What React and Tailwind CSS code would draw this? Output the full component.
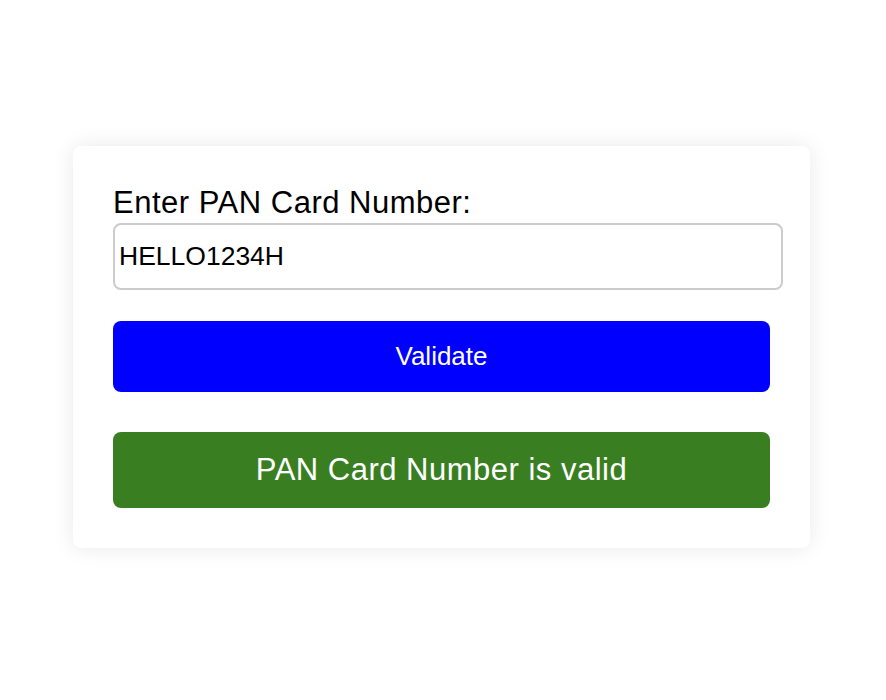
export default function App() {
  return (
    <div className="min-h-screen w-full bg-white flex items-center justify-center pb-[6px] pr-[3px]" style={{ fontFamily: '"Liberation Sans", Arial, sans-serif' }}>
      <div className="w-[737px] rounded-lg bg-white p-10 shadow-[0_0_22px_rgba(0,0,0,0.09)]">
        <label className="block text-[31px] leading-[34px] tracking-[0.5px] text-black mb-[3px]">Enter PAN Card Number:</label>
        <input
          type="text"
          defaultValue="HELLO1234H"
          className="block w-[670px] h-[67px] rounded-lg border-2 border-[#cccccc] px-1 text-[26.5px] text-black outline-none"
          style={{ fontFamily: '"Liberation Sans", Arial, sans-serif' }}
        />
        <button
          className="mt-[31px] flex h-[71px] w-full items-center justify-center rounded-lg bg-[#0000ff] text-[26px] text-white"
          style={{ fontFamily: '"Liberation Sans", Arial, sans-serif' }}
        >
          Validate
        </button>
        <div className="mt-10 flex h-[76px] w-full items-center justify-center rounded-lg bg-[#397f22] text-[31px] tracking-[0.5px] text-white">
          PAN Card Number is valid
        </div>
      </div>
    </div>
  );
}
